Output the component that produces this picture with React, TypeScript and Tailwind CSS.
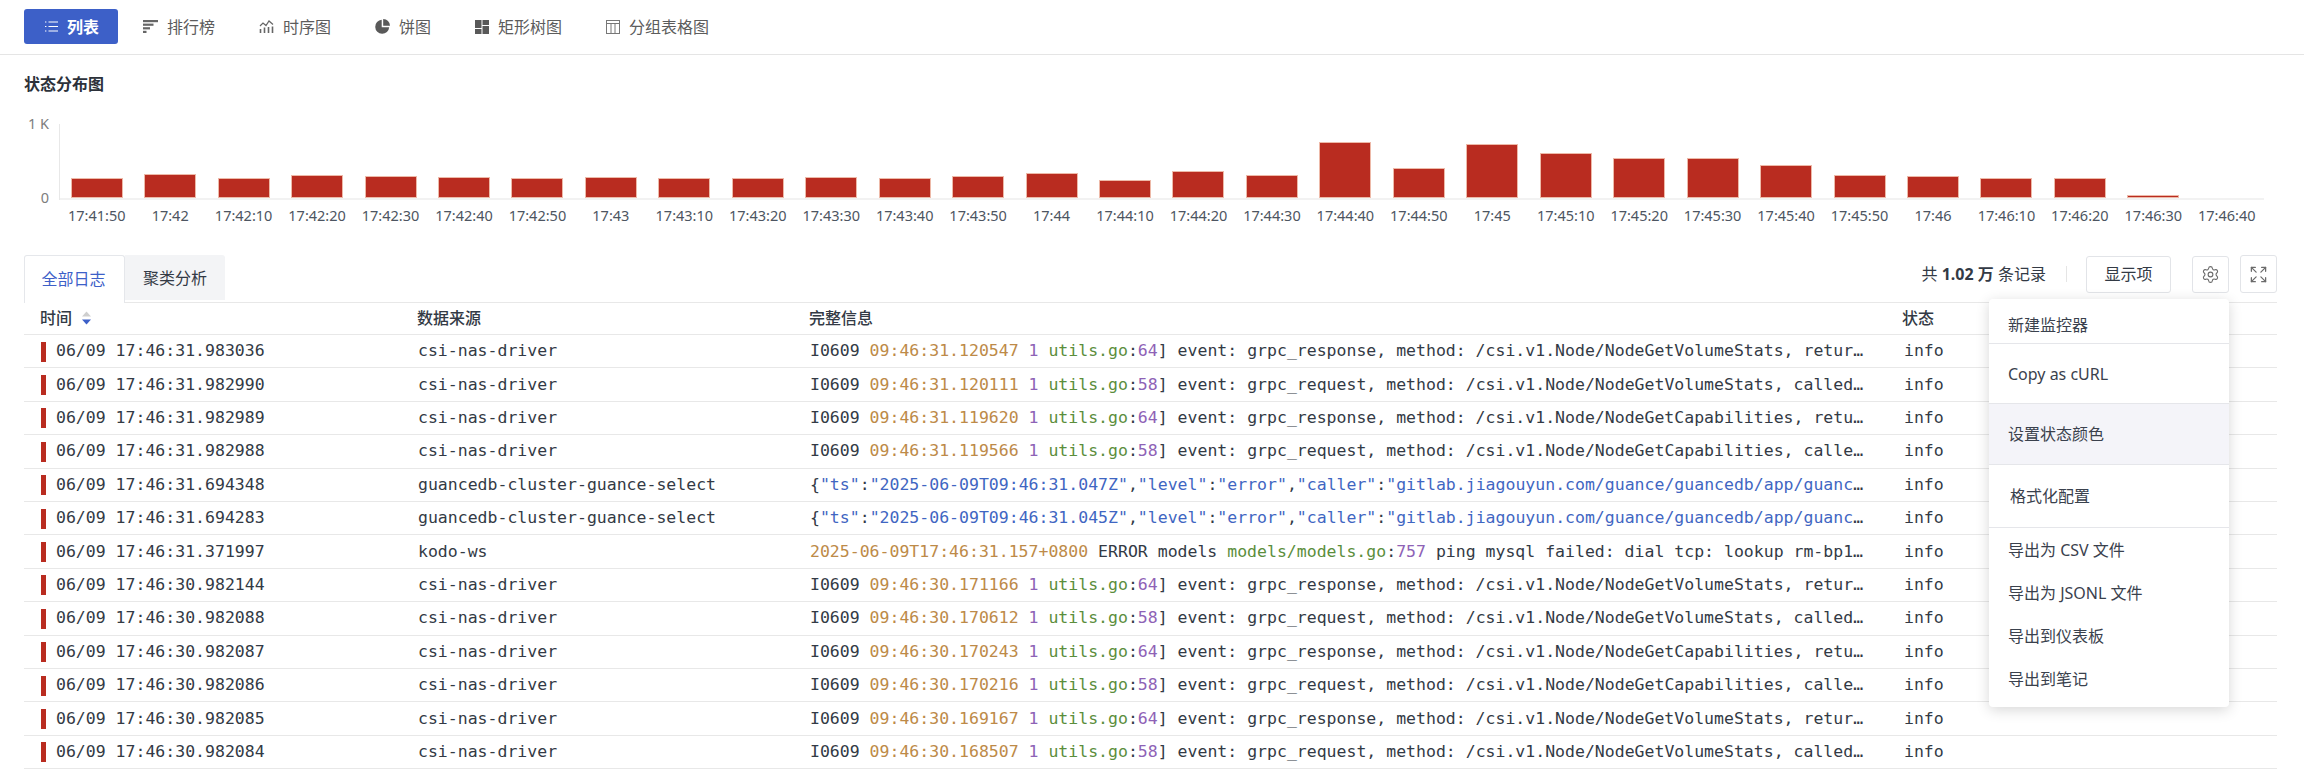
import { Expand, Settings } from 'lucide-react';
import type { ReactNode } from 'react';

const NAV_ITEMS = [
  { label: '排行榜', icon: <RankIcon /> },
  { label: '时序图', icon: <SeriesIcon /> },
  { label: '饼图', icon: <PieIcon /> },
  { label: '矩形树图', icon: <TreemapIcon /> },
  { label: '分组表格图', icon: <GroupTableIcon /> },
];

// bar tops are read off the reference, value = height in px above the axis
const BARS = [
  { t: '17:41:50', h: 20 },
  { t: '17:42', h: 24 },
  { t: '17:42:10', h: 20 },
  { t: '17:42:20', h: 23 },
  { t: '17:42:30', h: 22 },
  { t: '17:42:40', h: 21 },
  { t: '17:42:50', h: 20 },
  { t: '17:43', h: 21 },
  { t: '17:43:10', h: 20 },
  { t: '17:43:20', h: 20 },
  { t: '17:43:30', h: 21 },
  { t: '17:43:40', h: 20 },
  { t: '17:43:50', h: 22 },
  { t: '17:44', h: 25 },
  { t: '17:44:10', h: 18 },
  { t: '17:44:20', h: 27 },
  { t: '17:44:30', h: 23 },
  { t: '17:44:40', h: 56 },
  { t: '17:44:50', h: 30 },
  { t: '17:45', h: 54 },
  { t: '17:45:10', h: 45 },
  { t: '17:45:20', h: 40 },
  { t: '17:45:30', h: 40 },
  { t: '17:45:40', h: 33 },
  { t: '17:45:50', h: 23 },
  { t: '17:46', h: 22 },
  { t: '17:46:10', h: 20 },
  { t: '17:46:20', h: 20 },
  { t: '17:46:30', h: 3 },
  { t: '17:46:40', h: 0 },
];

function Orange({ children }: { children: ReactNode }) {
  return <span className="text-[#bd8a48]">{children}</span>;
}
function Purple({ children }: { children: ReactNode }) {
  return <span className="text-[#8e62b6]">{children}</span>;
}
function Green({ children }: { children: ReactNode }) {
  return <span className="text-[#5b8e3c]">{children}</span>;
}
function Blue({ children }: { children: ReactNode }) {
  return <span className="text-[#3f66c2]">{children}</span>;
}

function klog(ts: string, line: string, event: string, method: string, tail: string) {
  return (
    <>
      I0609 <Orange>{ts}</Orange> <Purple>1</Purple> <Green>utils.go</Green>:<Purple>{line}</Purple>] event: {event},
      method: /csi.v1.Node/{method}, {tail}
    </>
  );
}

function volResp(ts: string) {
  return klog(ts, '64', 'grpc_response', 'NodeGetVolumeStats', 'returned: usage bytes');
}
function volReq(ts: string) {
  return klog(ts, '58', 'grpc_request', 'NodeGetVolumeStats', 'called with volume id');
}
function capResp(ts: string) {
  return klog(ts, '64', 'grpc_response', 'NodeGetCapabilities', 'returned: capabilities');
}
function capReq(ts: string) {
  return klog(ts, '58', 'grpc_request', 'NodeGetCapabilities', 'called with empty args');
}

function jsonLog(ts: string) {
  return (
    <>
      {'{'}
      <Blue>"ts"</Blue>:<Blue>"{ts}"</Blue>,<Blue>"level"</Blue>:<Blue>"error"</Blue>,<Blue>"caller"</Blue>:
      <Blue>"gitlab.jiagouyun.com/guance/guancedb/app/guance-select/main.go"</Blue>
    </>
  );
}

const ROWS: { time: string; source: string; msg: ReactNode }[] = [
  { time: '06/09 17:46:31.983036', source: 'csi-nas-driver', msg: volResp('09:46:31.120547') },
  { time: '06/09 17:46:31.982990', source: 'csi-nas-driver', msg: volReq('09:46:31.120111') },
  { time: '06/09 17:46:31.982989', source: 'csi-nas-driver', msg: capResp('09:46:31.119620') },
  { time: '06/09 17:46:31.982988', source: 'csi-nas-driver', msg: capReq('09:46:31.119566') },
  { time: '06/09 17:46:31.694348', source: 'guancedb-cluster-guance-select', msg: jsonLog('2025-06-09T09:46:31.047Z') },
  { time: '06/09 17:46:31.694283', source: 'guancedb-cluster-guance-select', msg: jsonLog('2025-06-09T09:46:31.045Z') },
  {
    time: '06/09 17:46:31.371997',
    source: 'kodo-ws',
    msg: (
      <>
        <Orange>2025-06-09T17:46:31.157+0800</Orange> ERROR models <Green>models/models.go</Green>:<Purple>757</Purple>{' '}
        ping mysql failed: dial tcp: lookup rm-bp1234567890.mysql.rds
      </>
    ),
  },
  { time: '06/09 17:46:30.982144', source: 'csi-nas-driver', msg: volResp('09:46:30.171166') },
  { time: '06/09 17:46:30.982088', source: 'csi-nas-driver', msg: volReq('09:46:30.170612') },
  { time: '06/09 17:46:30.982087', source: 'csi-nas-driver', msg: capResp('09:46:30.170243') },
  { time: '06/09 17:46:30.982086', source: 'csi-nas-driver', msg: capReq('09:46:30.170216') },
  { time: '06/09 17:46:30.982085', source: 'csi-nas-driver', msg: volResp('09:46:30.169167') },
  { time: '06/09 17:46:30.982084', source: 'csi-nas-driver', msg: volReq('09:46:30.168507') },
];

function ListIcon() {
  return (
    <svg width="15" height="15" viewBox="0 0 15 15" fill="none" stroke="currentColor" strokeWidth="1.2">
      <path d="M1 3h1.4M1 7.5h1.4M1 12h1.4M4.5 3H14M4.5 7.5H14M4.5 12H14" />
    </svg>
  );
}

function RankIcon() {
  return (
    <svg width="15" height="15" viewBox="0 0 15 15" fill="#666">
      <rect x="0" y="1" width="15" height="2.2" />
      <rect x="0" y="4.6" width="10.5" height="2.2" />
      <rect x="0" y="8.2" width="7" height="2.2" />
      <rect x="0" y="11.8" width="3.5" height="2.2" />
    </svg>
  );
}

function SeriesIcon() {
  return (
    <svg width="15" height="15" viewBox="0 0 15 15" fill="none" stroke="#666" strokeWidth="1.2">
      <path d="M1 7l3-3 3 2.5L10 2l4 3.5" />
      <path d="M1.5 14v-4M5.5 14V8.5M9.5 14V8M13.5 14V7.5" strokeWidth="1.6" />
    </svg>
  );
}

function PieIcon() {
  return (
    <svg width="15" height="15" viewBox="0 0 15 15" fill="#595959">
      <path d="M6.7.8A7 7 0 1 0 14.2 8.3H6.7z" />
      <path d="M8.2 0A6.8 6.8 0 0 1 15 6.8H8.2z" />
    </svg>
  );
}

function TreemapIcon() {
  return (
    <svg width="14" height="14" viewBox="0 0 14 14" fill="#595959">
      <rect x="0" y="0" width="6.5" height="8" />
      <rect x="7.5" y="0" width="6.5" height="5" />
      <rect x="7.5" y="6" width="6.5" height="8" />
      <rect x="0" y="9" width="6.5" height="5" />
    </svg>
  );
}

function GroupTableIcon() {
  return (
    <svg width="14" height="14" viewBox="0 0 14 14" fill="none" stroke="#777" strokeWidth="1">
      <rect x="0.5" y="0.5" width="13" height="13" />
      <path d="M0.5 3.5h13M5 3.5v10M9 3.5v10" />
    </svg>
  );
}

function SortIcon() {
  return (
    <svg width="11" height="14" viewBox="0 0 11 14">
      <path d="M5.5 0.5L10 5.5H1z" fill="#cfcfcf" />
      <path d="M5.5 13.5L10 8.5H1z" fill="#3d60c8" />
    </svg>
  );
}

function Nav() {
  return (
    <div className="flex h-[55px] items-center border-b border-[#e5e5e5] pl-6 pb-[1px]">
      <button className="flex h-[35px] w-[94px] items-center gap-[8px] rounded-[3px] bg-[#3d60c8] pl-[20px] text-[16px] font-bold text-white">
        <ListIcon />
        列表
      </button>
      <div className="ml-[25px] flex gap-[44px] text-[16px] text-[#5c5c5c]">
        {NAV_ITEMS.map((item) => (
          <div key={item.label} className="flex items-center gap-[9px]">
            {item.icon}
            {item.label}
          </div>
        ))}
      </div>
    </div>
  );
}

function Chart() {
  return (
    <div className="px-6">
      <div className="h-[60px] pt-[17px] text-[16px] leading-6 font-bold text-[#2c313a]">状态分布图</div>
      <div className="flex">
        <div className="mr-[11px] flex h-[90px] w-[25px] flex-col justify-between text-right text-[14.5px] leading-4 text-[#7d7d7d]">
          <span>1 K</span>
          <span>0</span>
        </div>
        <div className="w-[2203.5px]">
          <div className="mt-[9px] grid h-[76px] grid-cols-[repeat(30,1fr)] items-end border-b-2 border-b-[#f2f2f2] shadow-[-1px_0_0_#e8e8e8]">
            {BARS.map((bar) => (
              <div key={bar.t} className="flex justify-center">
                {bar.h > 0 && (
                  <div
                    className="w-[52px] border border-[#edb9a8] bg-[#b92c20]"
                    style={{ height: bar.h }}
                  />
                )}
              </div>
            ))}
          </div>
          <div className="mt-[5px] grid grid-cols-[repeat(30,1fr)] text-center text-[14.5px] leading-5 whitespace-nowrap text-[#4d5561]">
            {BARS.map((bar) => (
              <div key={bar.t}>{bar.t}</div>
            ))}
          </div>
        </div>
      </div>
    </div>
  );
}

function Toolbar() {
  return (
    <div className="flex h-[47px] items-start justify-between">
      <div className="flex text-[16px]">
        <div className="relative z-10 -mb-px flex h-[48px] w-[101px] items-center justify-center rounded-t-[3px] border-x border-t border-[#e5e7eb] bg-white pr-[2px] pb-[2px] text-[#3d60c8]">
          全部日志
        </div>
        <div className="flex h-[45px] w-[100px] items-center justify-center rounded-tr-[3px] bg-[#f3f4f6] text-[#333a45]">
          聚类分析
        </div>
      </div>
      <div className="flex items-center text-[16px] text-[#333a45]">
        <span>
          共 <b className="font-bold">1.02 万</b> 条记录
        </span>
        <span className="mr-[19px] ml-[20px] h-[16px] w-px bg-[#e5e5e5]" />
        <button className="flex h-[37px] w-[85px] items-center justify-center rounded-[3px] border border-[#e2e4e8]">显示项</button>
        <button className="ml-[21px] flex h-[37px] w-[37px] items-center justify-center rounded-[3px] border border-[#e2e4e8] text-[#6b6b6b]">
          <Settings size={19} strokeWidth={1.4} />
        </button>
        <button className="ml-[11px] flex h-[38px] w-[37px] items-center justify-center rounded-[3px] border border-[#e2e4e8] text-[#6b6b6b]">
          <Expand size={19} strokeWidth={1.6} />
        </button>
      </div>
    </div>
  );
}

function LogTable() {
  return (
    <div className="border-t border-[#e8e8e8]">
      <div className="grid h-[32px] grid-cols-[377px_392px_1093px_1fr] items-center border-b border-[#e8e8e8] pb-[1px] text-[16px] font-medium text-[#333a45]">
        <div className="flex items-center gap-[9px] pl-[16px]">
          时间
          <SortIcon />
        </div>
        <div className="pl-[16px]">数据来源</div>
        <div className="pl-[16px]">完整信息</div>
        <div className="pl-[16px]">状态</div>
      </div>
      {ROWS.map((row) => (
        <div
          key={row.time}
          className="grid h-[33.4px] grid-cols-[377px_392px_1093px_1fr] items-center border-b border-[#e8e8e8] pt-[1px] font-['DejaVu_Sans_Mono',monospace] text-[16.5px] text-[#333a45]"
        >
          <div className="flex items-center gap-[10px] pl-[17px]">
            <span className="h-[20px] w-[5px] bg-[#b92c20]" />
            {row.time}
          </div>
          <div className="pl-[17px]">{row.source}</div>
          <div className="pl-[17px]">
            <div className="w-[1056px] truncate">{row.msg}</div>
          </div>
          <div className="pl-[18px]">info</div>
        </div>
      ))}
    </div>
  );
}

function Menu() {
  return (
    <div className="absolute top-[44px] left-[1965px] z-20 w-[240px] rounded-[4px] bg-white text-[16px] text-[#3a414d] shadow-[0_3px_14px_rgba(0,0,0,0.16)]">
      <div className="flex h-[45px] items-center border-b border-[#e5e6ea] pt-[8px] pl-[19px]">新建监控器</div>
      <div className="flex h-[60px] items-center border-b border-[#e5e6ea] pl-[19px]">Copy as cURL</div>
      <div className="flex h-[61px] items-center border-b border-[#e5e6ea] bg-[#f4f4f9] pl-[19px]">设置状态颜色</div>
      <div className="flex h-[63px] items-center border-b border-[#e5e6ea] pl-[21px]">格式化配置</div>
      <div className="pb-[7px]">
        <div className="flex h-[43px] items-center pl-[19px]">导出为 CSV 文件</div>
        <div className="flex h-[43px] items-center pl-[19px]">导出为 JSONL 文件</div>
        <div className="flex h-[43px] items-center pl-[19px]">导出到仪表板</div>
        <div className="flex h-[43px] items-center pl-[19px]">导出到笔记</div>
      </div>
    </div>
  );
}

export default function App() {
  return (
    <div className="h-[772px] w-[2304px] overflow-hidden bg-white font-['Noto_Sans','Noto_Sans_CJK_SC',sans-serif]">
      <Nav />
      <Chart />
      <div className="relative mt-[30px] mr-[27px] ml-6">
        <Toolbar />
        <LogTable />
        <Menu />
      </div>
    </div>
  );
}
